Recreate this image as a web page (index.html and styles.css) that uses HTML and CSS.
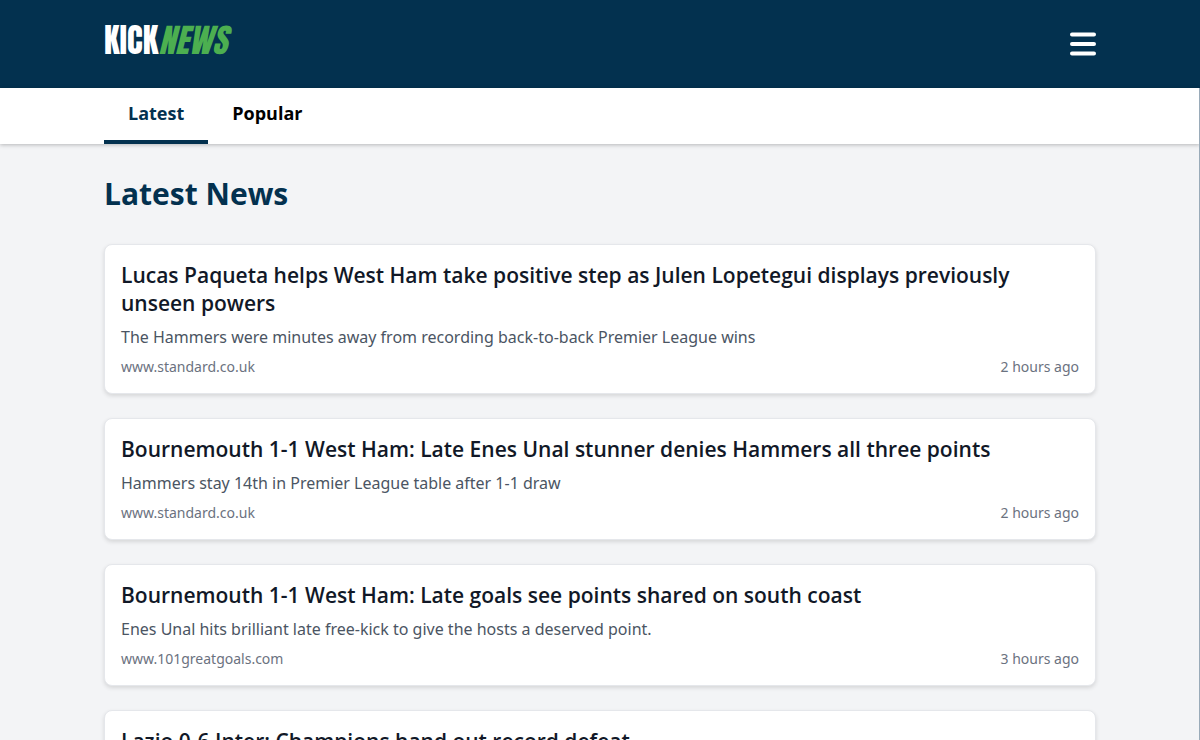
FILE: index.html
```html
<!DOCTYPE html>
<html lang="en">
<head>
  <meta charset="UTF-8">
  <meta name="viewport" content="width=device-width, initial-scale=1.0">
  <title>KickNews</title>
  <link rel="stylesheet" href="styles.css">
</head>
<body>
  <header class="header">
    <div class="container header-inner">
      <a href="#" class="logo">KICK<em>NEWS</em></a>
      <button type="button" class="menu-button" aria-label="Open menu">
        <svg width="26" height="24" viewBox="0 0 26 24" fill="none" stroke="#fff" stroke-width="4" stroke-linecap="round">
          <path d="M2 2.600h22M2 12h22M2 21.400h22"/>
        </svg>
      </button>
    </div>
  </header>

  <div class="content">
    <nav class="tabs">
      <div class="container tabs-inner">
        <a href="#latest" class="tab active">Latest</a>
        <a href="#popular" class="tab">Popular</a>
      </div>
    </nav>

    <main class="container main">
      <h1>Latest News</h1>
      <div class="news-list">
        <a href="#" class="card">
          <h2>Lucas Paqueta helps West Ham take positive step as Julen Lopetegui displays previously unseen powers</h2>
          <p>The Hammers were minutes away from recording back-to-back Premier League wins</p>
          <div class="meta"><span>www.standard.co.uk</span><span>2 hours ago</span></div>
        </a>
        <a href="#" class="card">
          <h2>Bournemouth 1-1 West Ham: Late Enes Unal stunner denies Hammers all three points</h2>
          <p>Hammers stay 14th in Premier League table after 1-1 draw</p>
          <div class="meta"><span>www.standard.co.uk</span><span>2 hours ago</span></div>
        </a>
        <a href="#" class="card">
          <h2>Bournemouth 1-1 West Ham: Late goals see points shared on south coast</h2>
          <p>Enes Unal hits brilliant late free-kick to give the hosts a deserved point.</p>
          <div class="meta"><span>www.101greatgoals.com</span><span>3 hours ago</span></div>
        </a>
        <a href="#" class="card">
          <h2>Lazio 0-6 Inter: Champions hand out record defeat</h2>
        </a>
      </div>
    </main>
  </div>
</body>
</html>
```
FILE: styles.css
```css
* {
  box-sizing: border-box;
}
body {
  margin: 0;
  font-family: "Segoe UI", "Noto Sans", "Open Sans", sans-serif;
  background-color: #f3f4f6;
  color: #111827;
}
a {
  color: inherit;
  text-decoration: none;
}
.container {
  max-width: 1024px;
  margin: 0 auto;
  padding: 0 16px;
}
.header {
  background-color: #03314f;
}
.header-inner {
  display: flex;
  align-items: center;
  justify-content: space-between;
  height: 88px;
}
.logo {
  padding-bottom: 8px;
  font-family: "Anton", "Liberation Sans", sans-serif;
  font-size: 33px;
  line-height: 40px;
  color: #fff;
}
.logo em {
  color: #4caf50;
}
.menu-button {
  display: flex;
  padding: 0;
  border: none;
  background: none;
  cursor: pointer;
}
.content {
  position: relative;
}
/* thin edge of the side menu */
.content::after {
  content: "";
  position: absolute;
  top: 0;
  right: 0;
  bottom: 0;
  width: 1px;
  background-color: #9aabb9;
}
.tabs {
  background-color: #fff;
  box-shadow: 0 1px 4px rgba(0, 0, 0, 0.25);
}
.tabs-inner {
  display: flex;
}
.tab,
h1,
h2 {
  font-family: "Segoe UI", "Open Sans", sans-serif;
  font-weight: 700;
}
.tab {
  padding: 12px 24px 14px;
  border-bottom: 4px solid transparent;
  font-size: 18px;
  line-height: 26px;
  color: #000;
}
.tab.active {
  border-color: #03314f;
  color: #03314f;
}
.main {
  padding-top: 32px;
  padding-bottom: 32px;
}
h1 {
  margin: 0 0 32px;
  font-size: 30px;
  line-height: 36px;
  color: #03314f;
}
.news-list {
  display: flex;
  flex-direction: column;
  gap: 24px;
}
.card {
  padding: 16px;
  border: 1px solid #e5e7eb;
  border-radius: 8px;
  background-color: #fff;
  box-shadow: 0 2px 4px rgba(0, 0, 0, 0.12);
}
.card h2 {
  margin: 0 0 8px;
  font-size: 21px;
  line-height: 28px;
  font-weight: 600;
}
.card p {
  margin: 0 0 8px;
  font-size: 16px;
  line-height: 24px;
  color: #4b5563;
}
.meta {
  display: flex;
  justify-content: space-between;
  font-size: 14px;
  line-height: 20px;
  color: #6b7280;
}
```
